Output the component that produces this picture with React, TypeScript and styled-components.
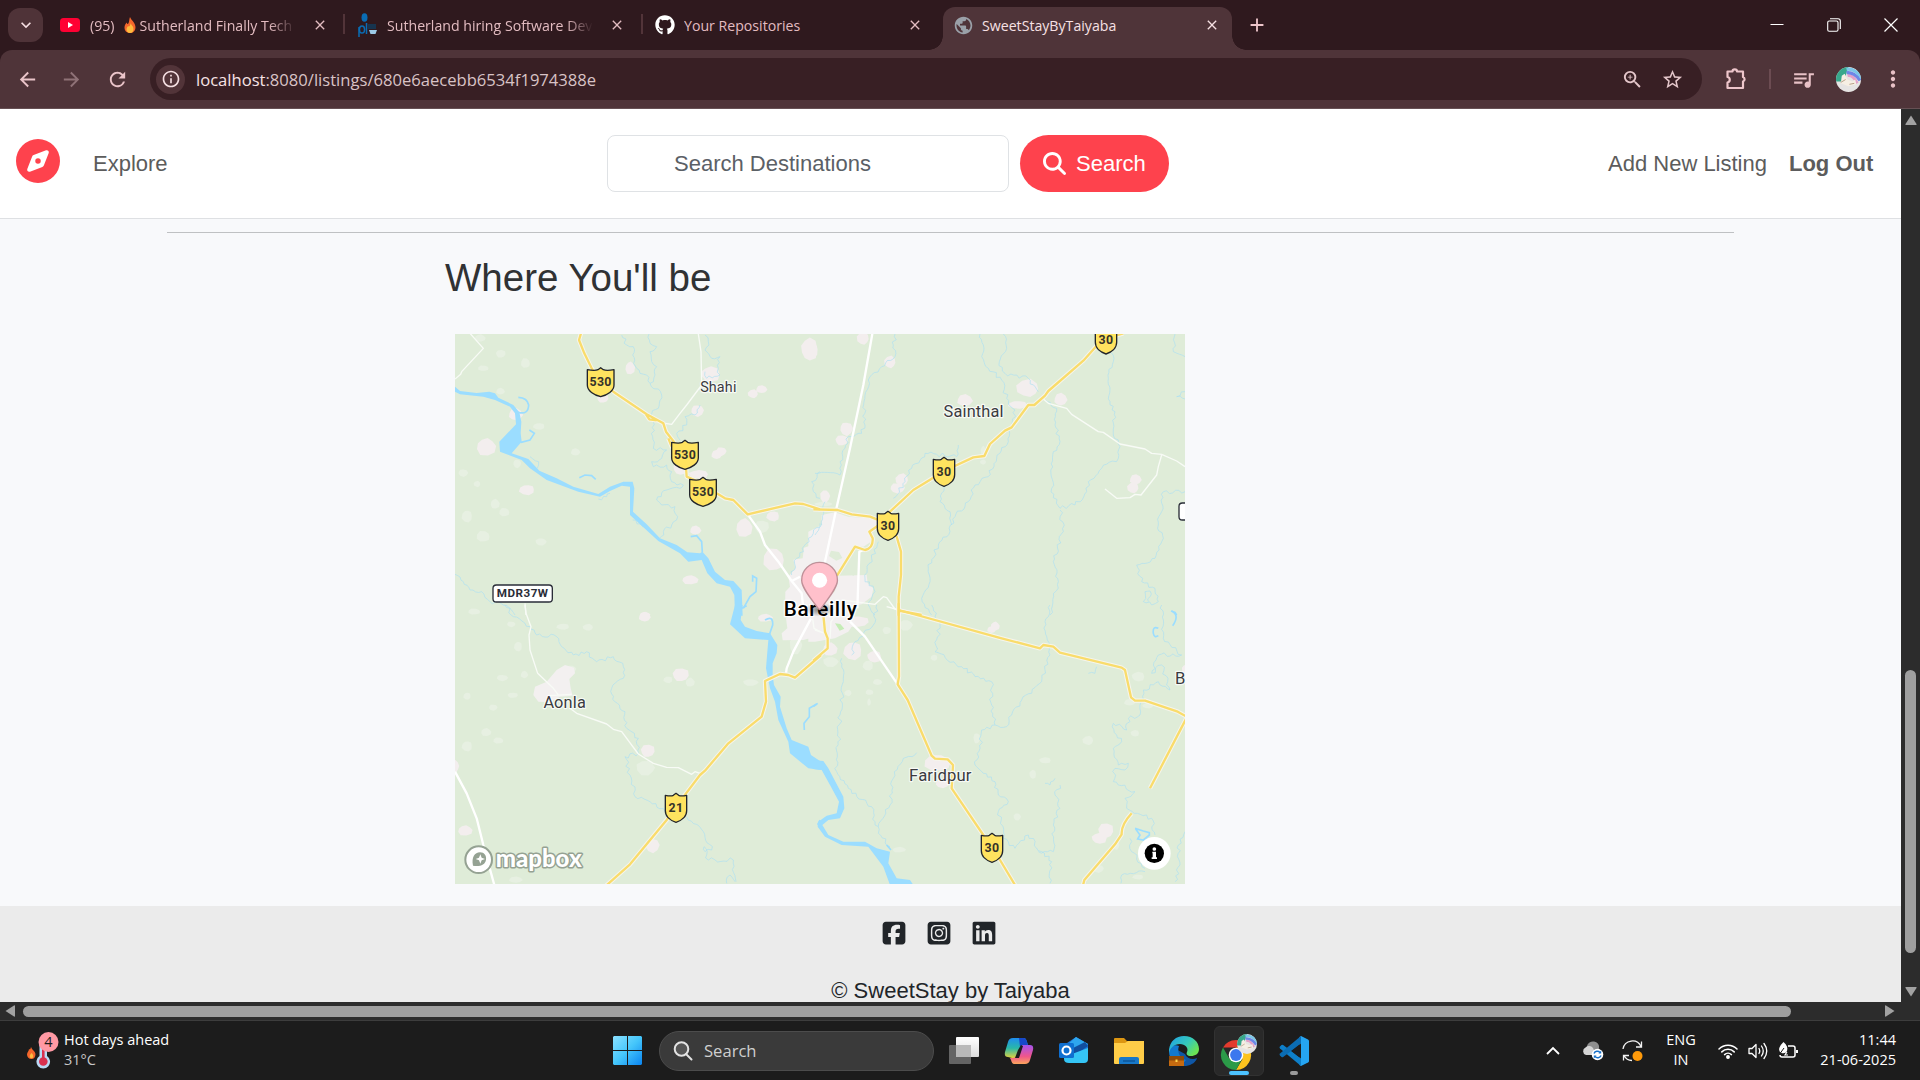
import React from "react";
import styled, { createGlobalStyle } from "styled-components";
import {
  MdAdd,
  MdArrowBack,
  MdArrowForward,
  MdClose,
  MdInfoOutline,
  MdKeyboardArrowDown,
  MdMoreVert,
  MdPublic,
  MdQueueMusic,
  MdRefresh,
  MdStarBorder,
  MdZoomIn,
} from "react-icons/md";
import {
  FaCompass,
  FaGithub,
  FaLinkedin,
  FaMagnifyingGlass,
  FaSquareFacebook,
  FaSquareInstagram,
} from "react-icons/fa6";

const ui = `"Open Sans", "Noto Sans", sans-serif`;
const body = `"Liberation Sans", Arial, sans-serif`;

const GlobalStyle = createGlobalStyle`
  * { box-sizing: border-box; }
  html, body { margin: 0; padding: 0; overflow: hidden; background: #1c1c1c; }
  svg { display: block; flex: none; }
`;

const Screen = styled.div`
  width: 1920px;
  height: 1080px;
  display: flex;
  flex-direction: column;
  overflow: hidden;
  font-family: ${ui};
`;

/* ---------- browser frame ---------- */

const TabStrip = styled.div`
  height: 50px;
  flex: none;
  display: flex;
  align-items: flex-end;
  background: #2f191e;
  padding-left: 8px;
`;

const TabSearch = styled.div`
  width: 35px;
  height: 34px;
  margin: 0 5px 8px 0;
  border-radius: 12px;
  background: #4f3338;
  color: #f6dfe2;
  display: flex;
  align-items: center;
  justify-content: center;
`;

const Tab = styled.div<{ $w: number; $l: number; $r: number; $active?: boolean }>`
  position: relative;
  width: ${(p) => p.$w}px;
  height: 43px;
  flex: none;
  display: flex;
  align-items: center;
  padding: 0 ${(p) => p.$r}px 7px ${(p) => p.$l}px;
  color: ${(p) => (p.$active ? "#f7e1e4" : "#e3bcc1")};
  background: ${(p) => (p.$active ? "#4f3439" : "transparent")};
  border-radius: 12px 12px 0 0;
  ${(p) =>
    p.$active &&
    `
    &::before, &::after {
      content: "";
      position: absolute;
      bottom: 0;
      width: 14px;
      height: 14px;
    }
    &::before { left: -14px; background: radial-gradient(circle at 0 0, transparent 13.5px, #4f3439 14px); }
    &::after { right: -14px; background: radial-gradient(circle at 100% 0, transparent 13.5px, #4f3439 14px); }
  `}
`;

const TabIcon = styled.div<{ $gap: number }>`
  width: 20px;
  margin-right: ${(p) => p.$gap}px;
  flex: none;
`;

const TabTitle = styled.div<{ $fade?: boolean }>`
  flex: 1;
  min-width: 0;
  margin-right: 13px;
  padding-top: 2px;
  display: flex;
  align-items: center;
  overflow: hidden;
  white-space: nowrap;
  font-size: 14.15px;
  line-height: 20px;
  ${(p) => p.$fade && `mask-image: linear-gradient(90deg, #000 calc(100% - 30px), transparent calc(100% - 3px));`}
`;

const TitleEmoji = styled.span`
  flex: none;
  margin: 0 4px 2px 9px;
`;

const TabDivider = styled.div`
  width: 2px;
  height: 20px;
  margin-bottom: 16px;
  background: #523439;
`;

const NewTab = styled.div`
  margin: 0 0 14px 14px;
  color: #edc5ca;
`;

const WindowButtons = styled.div`
  margin-left: auto;
  height: 50px;
  padding-right: 22px;
  display: flex;
  align-items: center;
  gap: 43px;
`;

const Toolbar = styled.div`
  height: 59px;
  flex: none;
  background: linear-gradient(#2f191e, #2f191e) top / 100% 12px no-repeat;
  color: #e8c1c6;
`;

const ToolbarInner = styled.div`
  height: 100%;
  display: flex;
  align-items: center;
  background: #4f3439;
  border-radius: 12px 12px 0 0;
  border-bottom: 1px solid #665054;
  padding-left: 16px;
`;

const NavButton = styled.div<{ $dim?: boolean; $gap: number }>`
  margin-right: ${(p) => p.$gap}px;
  color: ${(p) => (p.$dim ? "#8f7277" : "#eac4c9")};
`;

const Omnibox = styled.div`
  width: 1552px;
  height: 42px;
  border-radius: 21px;
  background: #381f24;
  display: flex;
  align-items: center;
  padding: 0 18px 0 6px;
`;

const SiteInfo = styled.div`
  width: 29px;
  height: 29px;
  border-radius: 50%;
  background: #523439;
  color: #f5dfe2;
  display: flex;
  align-items: center;
  justify-content: center;
  margin-right: 11px;
`;

const Url = styled.div`
  flex: 1;
  font-size: 16.6px;
  color: #d9c3c6;
  b {
    font-weight: 400;
    color: #f7e3e5;
  }
`;

const OmniAction = styled.div`
  margin-left: 17px;
  color: #e4c6ca;
`;

const ToolbarActions = styled.div`
  display: flex;
  align-items: center;
  padding-left: 23px;
`;

const ToolbarDivider = styled.div`
  width: 2px;
  height: 20px;
  margin: 0 20px 0 22px;
  background: #6c4c52;
`;

const Profile = styled.div`
  margin: 0 19px 0 20px;
`;

/* ---------- page ---------- */

const Viewport = styled.div`
  height: 893px;
  flex: none;
  display: flex;
`;

const Page = styled.div`
  width: 1901px;
  height: 893px;
  overflow: hidden;
  display: flex;
  flex-direction: column;
  background: #f8f9fb;
  font-family: ${body};
  font-size: 22px;
`;

const Navbar = styled.header`
  height: 110px;
  flex: none;
  display: flex;
  align-items: center;
  background: #fff;
  border-bottom: 1px solid #dee0e3;
  padding-left: 16px;
  color: #5c5c5c;
`;

const Brand = styled.div`
  color: #fe424d;
  margin: 0 33px 6px 0;
`;

const NavLink = styled.span<{ $bold?: boolean }>`
  font-weight: ${(p) => (p.$bold ? 700 : 400)};
  line-height: 33px;
`;

const SearchForm = styled.div`
  margin-left: auto;
  display: flex;
  gap: 11px;
`;

const SearchField = styled.div`
  width: 402px;
  height: 57px;
  border: 1px solid #dfe2e5;
  border-radius: 8px;
  padding-left: 66px;
  line-height: 55px;
  color: #5b6066;
`;

const SearchButton = styled.div`
  width: 149px;
  height: 57px;
  border-radius: 29px;
  background: #fe424d;
  color: #fff;
  display: flex;
  align-items: center;
  padding-left: 23px;
  gap: 10px;
`;

const Account = styled.nav`
  width: 293px;
  margin-left: 439px;
  display: flex;
  gap: 22px;
`;

const Rule = styled.div`
  width: 1567px;
  height: 1px;
  margin: 13px 0 0 167px;
  flex: none;
  background: #bfc1c3;
`;

const Section = styled.section`
  margin-left: 445px;
  padding-top: 22px;
  height: 673px;
  flex: none;
`;

const Heading = styled.h3`
  margin: 0 0 33px;
  font-size: 38.5px;
  line-height: 46px;
  font-weight: 400;
  color: #303234;
`;

const MapBox = styled.div`
  width: 730px;
  height: 550px;
  margin-left: 10px;
  overflow: hidden;
`;

const Footer = styled.footer`
  flex: 1;
  min-height: 0;
  overflow: hidden;
  background: #ebebeb;
  color: #212529;
  text-align: center;
  white-space: nowrap;
`;

const Socials = styled.div`
  display: flex;
  justify-content: center;
  gap: 19px;
  padding: 14px 24px 0 0;
`;

const Copyright = styled.div`
  margin-top: 28px;
  line-height: 33px;
`;

const VScroll = styled.div`
  width: 19px;
  background: #2c2c2c;
  display: flex;
  flex-direction: column;
  align-items: center;
  padding: 6px 0 5px;
`;

const VThumb = styled.div`
  width: 11px;
  height: 283px;
  margin-top: 545px;
  margin-bottom: auto;
  border-radius: 6px;
  background: #9f9f9f;
`;

const HScroll = styled.div`
  height: 18px;
  flex: none;
  background: #2c2c2c;
  display: flex;
  align-items: center;
  padding: 0 25px 0 5px;
`;

const HThumb = styled.div`
  width: 1768px;
  height: 11px;
  margin: 1px auto 0 8px;
  border-radius: 6px;
  background: #9f9f9f;
`;

/* ---------- taskbar ---------- */

const Taskbar = styled.div`
  height: 60px;
  flex: none;
  display: flex;
  align-items: center;
  background: #1c1c1c;
  border-top: 1px solid #3d3d3d;
  color: #fff;
  font-size: 14.5px;
`;

const Weather = styled.div`
  width: 587px;
  padding-left: 26px;
  display: flex;
  align-items: center;
  gap: 4px;
`;

const Lines = styled.div<{ $align?: string; $w?: number }>`
  width: ${(p) => (p.$w ? p.$w + "px" : "auto")};
  text-align: ${(p) => p.$align || "left"};
  line-height: 20px;
  padding-bottom: 2px;
  white-space: nowrap;
`;

const Muted = styled.div`
  color: #c9c9c9;
`;

const Start = styled.div`
  width: 72px;
  padding-left: 26px;
`;

const TaskSearch = styled.div`
  width: 275px;
  height: 40px;
  border-radius: 20px;
  background: #3a3a3a;
  border: 1px solid #4c4c4c;
  display: flex;
  align-items: center;
  gap: 11px;
  padding-left: 13px;
  font-size: 16.6px;
  color: #cfcfcf;
`;

const Apps = styled.div`
  display: flex;
  padding-left: 5px;
  gap: 5px;
`;

const AppButton = styled.div<{ $active?: boolean; $bar?: string; $barW?: number }>`
  position: relative;
  width: 50px;
  height: 50px;
  display: flex;
  align-items: center;
  justify-content: center;
  border-radius: 6px;
  background: ${(p) => (p.$active ? "#292929" : "transparent")};
  border: 1px solid ${(p) => (p.$active ? "#323232" : "transparent")};
  &::after {
    content: "";
    position: absolute;
    bottom: 0;
    width: ${(p) => p.$barW || 0}px;
    height: 4px;
    border-radius: 2px;
    background: ${(p) => p.$bar || "transparent"};
  }
`;

const Tray = styled.div`
  margin-left: auto;
  padding-right: 24px;
  display: flex;
  align-items: center;
`;

const TrayIcon = styled.div<{ $gap: number }>`
  margin-right: ${(p) => p.$gap}px;
`;

/* ---------- map data ---------- */

type Blob = [number, number, number, number];
interface Sheet {
  dx: number;
  dy: number;
  towns: Blob[];
  faint: Blob[];
  areas: string[];
  river: string;
  creeks: string;
  streams: string[];
  yellow: string;
  white: string;
  thin: string;
}

const NUDGE = [0.95, 0.8, 1.05, 0.75, 1, 0.85, 1.08, 0.78, 0.9];
const blobPath = ([cx, cy, w, h]: Blob) => {
  const pts: string[] = [];
  for (let i = 0; i < 9; i++) {
    const k = NUDGE[(i * 2 + Math.round(cx + 9)) % 9];
    const a = (i / 9) * Math.PI * 2;
    pts.push(`${(cx + (Math.cos(a) * w * k) / 2).toFixed(1)} ${(cy + (Math.sin(a) * h * k) / 2).toFixed(1)}`);
  }
  return "M" + pts.join("L") + "Z";
};

const meander = (src: string, seed: number) => {
  const n = src.split(/[^0-9.-]+/).filter(Boolean).map(Number);
  let s = seed * 7919 + 13;
  const rnd = () => {
    s = (s * 1103515245 + 12345) % 2147483648;
    return s / 2147483648 - 0.5;
  };
  let d = `M${n[0]} ${n[1]}`;
  for (let i = 2; i < n.length; i += 2) {
    const dx = n[i] - n[i - 2];
    const dy = n[i + 1] - n[i - 1];
    const len = Math.hypot(dx, dy) || 1;
    const steps = Math.max(1, Math.round(len / 9));
    for (let j = 1; j <= steps; j++) {
      const o = j === steps ? 0 : rnd() * 13;
      d += `L${(n[i - 2] + (dx * j) / steps - (dy / len) * o).toFixed(1)} ${(n[i - 1] + (dy * j) / steps + (dx / len) * o).toFixed(1)}`;
    }
  }
  return d;
};

const sheets: Sheet[] = [
  {
    dx: -15,
    dy: -27,
    towns: [[1075, 73, 54, 76], [540, 127, 32, 42], [778, 148, 62, 52], [910, 208, 34, 28], [933, 194, 36, 26], [740, 256, 42, 38], [195, 270, 45, 40], [108, 363, 64, 58], [232, 493, 50, 34], [798, 390, 34, 30], [812, 378, 34, 28], [688, 430, 44, 44], [742, 448, 64, 28], [882, 605, 54, 62], [970, 572, 42, 34], [735, 617, 36, 30], [720, 763, 54, 30], [975, 705, 70, 74], [458, 222, 38, 28], [585, 868, 34, 16]],
    faint: [[152, 88, 32, 26], [102, 130, 36, 18], [228, 115, 30, 32], [90, 38, 36, 24], [150, 200, 28, 22], [268, 303, 38, 22], [375, 382, 30, 24], [200, 415, 26, 28], [38, 443, 32, 24], [82, 478, 22, 20], [52, 572, 34, 40], [135, 535, 30, 32], [165, 562, 34, 28], [102, 635, 44, 36], [275, 650, 36, 24], [935, 608, 48, 42]],
    areas: ["M1110 630L1090 640 1086 660 1062 668 1058 700 1030 704 1036 730 1015 755 1020 785 1006 800 1005 870H1110Z"],
    river: "M15 185L30 198 80 204 118 200 135 205 145 218 190 240 208 262 214 290 212 325 215 350 185 385 235 402 268 437 320 460 370 485 445 507 480 485 520 470 548 470 553 490 549 560 590 598 630 640 680 660 712 682 750 685 757 680 775 700 795 740 825 765 850 768 875 795 878 872 855 872 853 810 840 785 800 775 772 745 755 705 715 710 690 685 625 648 540 570 540 485 515 482 480 498 450 515 385 500 290 465 240 430 215 405 150 380 148 350 198 298 195 265 180 245 135 225 100 215 30 208 15 200Z",
    creeks: "M205 262Q235 270 236 240Q232 218 205 217M213 352L240 345 253 325 238 315M388 458L405 450 425 452 437 463M722 635L740 632 755 650 757 682M880 850L900 815 918 800 920 760 908 753 908 770",
    streams: ["515 30 530 60 550 65 548 90 560 130 570 145 590 150 600 175 635 210 625 250 595 270 610 290 610 370 650 375 635 400 605 410 610 425 650 420 665 440 665 470 700 480 690 490 650 495 620 525 635 540 675 545 683 575 665 600 640 620 628 640", "597 27 600 55 620 65 600 80 605 110 620 125 615 150 600 175", "765 30 775 50 765 75 785 100 810 95 805 130 810 150 770 160 765 140", "750 240 735 270 705 275 710 300 680 325 690 345", "1110 440 1085 470 1090 500 1110 520", "1110 595 1090 625 1075 640 1060 680 1040 700 1025 750", "15 748 40 770 60 795 95 800 120 830 160 840 185 855 195 870", "240 395 266 410 262 430", "445 522 470 515 480 505", "548 585 570 597 590 605"],
    yellow: "M396 15L387 45 403 85 425 130 452 170 490 200 590 268 640 295 648 320 675 355 705 390 710 455 755 475 800 505 825 520 850 525 893 568 1035 535 1060 537 1110 553M588 268L598 283 620 286 M655 340L665 365 690 380",
    white: "M893 568L930 620 945 660 985 710 1025 768 1055 805 1060 850M1025 768L1050 755",
    thin: "M745 27L753 80 755 180 710 240 690 265 665 298 645 295M60 25L100 70 35 140 32 148 15 162M225 835L228 870",
  },
  {
    dx: 1080,
    dy: -27,
    towns: [[145, 42, 40, 42], [-2, 75, 24, 44], [226, 113, 38, 40], [447, 228, 50, 40], [640, 192, 74, 58], [610, 238, 62, 26], [735, 225, 42, 42], [92, 310, 42, 44], [80, 348, 42, 34], [262, 466, 42, 40], [245, 488, 48, 34], [32, 513, 32, 42], [960, 465, 38, 34], [955, 490, 38, 36]],
    faint: [[505, 380, 16, 34], [505, 412, 20, 16], [28, 538, 60, 14], [60, 665, 20, 20]],
    areas: ["M-20 620L20 600 20 570 60 562 100 575 190 582 186 610 166 626 168 650 145 665 115 662 85 720 70 752 155 750 158 775 175 790 170 815 140 838 100 845 70 870H-20Z"],
    river: "",
    creeks: "M1068 858L1080 862 1085 870",
    streams: ["240 27 235 60 240 95 200 125 160 165 147 230 150 300 140 325 100 335 90 370 75 410 75 450 0 445", "495 27 505 60 500 95 520 130 560 165 575 220 600 255 590 300 580 350 545 400 520 455 480 480 460 530 420 575 405 620 370 660 340 730 345 770 320 820 350 870", "565 27 575 70 553 110 570 145 640 160 670 200", "430 360 425 395 330 385 290 430 270 470 235 520", "880 70 895 110 880 160 885 230 900 260 895 330 915 365 910 400 860 430 820 470 815 500 780 540 735 550 710 490 715 380 735 350 720 300 725 250 690 225", "735 555 745 620 715 710 730 770 705 870", "387 480 375 530 405 560 410 600", "1080 27 1075 80 1110 95", "1110 200 1085 215 1110 222", "1110 500 1045 500 1040 560 1030 600 1045 640 1020 700 965 720 980 770 1020 790 1030 830 1010 840 985 830 990 800 1005 798 1000 830", "190 650 170 700 150 760 180 800 160 840 180 870", "30 530 20 600 0 630"],
    yellow: "M-5 553L68 555 110 568 165 575 195 587M66 752L120 665 150 675Q175 670 173 640L163 620 195 598M219 600L225 560 295 495 355 458 387 438 475 397 508 393 525 357 570 317 590 307 640 240 658 240 690 212 700 198 805 107 845 62 873 40 925 25M219 600L245 635 258 680 258 750 251 815 251 872M251 857L320 870",
    white: "M174 15L145 180 105 370 62 560 30 710 10 800M150 674L133 680 127 850",
    thin: "M685 222L700 235 755 250 770 268 850 320 865 322 915 357 990 372 1010 385 1040 388 1085 408 1110 425M1040 390L1030 425 1025 450 978 510 960 508 945 518 905 520 870 492M80 825L180 838 205 815 215 818 240 852 252 856",
  },
  {
    dx: -15,
    dy: 813,
    towns: [[582, 37, 38, 32], [692, 212, 54, 44], [593, 440, 46, 42], [605, 720, 46, 46], [45, 675, 48, 34], [14, 483, 32, 46], [945, 37, 50, 26]],
    faint: [[182, 57, 28, 18], [340, 64, 42, 20], [415, 68, 34, 22], [205, 123, 26, 32], [155, 218, 38, 20], [222, 210, 24, 24], [188, 272, 34, 18], [52, 272, 24, 24], [128, 307, 28, 20], [108, 380, 34, 26], [147, 407, 34, 20], [52, 422, 34, 34], [590, 488, 60, 50], [655, 223, 30, 22], [720, 230, 30, 30], [905, 232, 50, 22], [195, 825, 44, 20], [75, 20, 40, 20], [1040, 120, 40, 60], [365, 192, 34, 24]],
    areas: ["M250 270L255 245 290 230 320 195 345 180 372 188 375 205 358 222 362 250 368 272 330 275 300 292 265 290Z", "M1008 40L1060 0H1115V90L1060 105 998 106 995 85 1012 70Z"],
    river: "M855 0H878L872 45 885 65 920 78 960 85 982 120 980 145 968 175 968 210 972 240 992 275 990 305 1010 370 1025 405 1075 425 1083 450 1110 468 1112 495 1075 490 1020 445 1015 410 985 345 975 290 960 250 948 190 952 140 955 105 885 100 840 58Z",
    creeks: "M875 10L890 2M945 45Q970 30 968 60L957 92M1100 297L1078 310 1078 335 1062 355 1063 375M1110 645L1104 657 1110 668",
    streams: ["165 0 190 35 240 65 260 90 320 95 335 125 370 150 410 140 440 170 490 155 520 185 520 220 485 250 495 290 525 320 530 370 565 400 565 445 525 455 540 510 555 575 600 590 645 620", "710 635 760 680 785 735 765 740 762 725 775 765 850 765 858 830", "830 835 840 810 855 830"],
    yellow: "M1113 150L1035 218 1015 210 990 207 945 228 948 290 935 335 835 415 765 497 750 510 678 605 650 645 540 778 465 845",
    white: "M1083 40L1030 140 1010 190 1008 205M15 500L50 565 80 640 100 720 133 840",
    thin: "M1088 40L1092 70 1110 80M225 0L228 25 243 65 237 90 240 135 263 205 310 250 325 270M300 272L365 268M360 310L380 325 470 357 490 373 515 380 565 447 610 475 650 487 685 488 725 508 735 500 750 505",
  },
  {
    dx: 1080,
    dy: 813,
    towns: [[540, 62, 30, 30], [528, 75, 28, 22], [372, 475, 88, 54], [380, 535, 46, 28], [872, 680, 50, 50], [850, 700, 50, 36], [1112, 195, 22, 36], [115, 135, 60, 60], [175, 155, 46, 40], [45, 130, 48, 44], [125, 52, 80, 36]],
    faint: [[215, 78, 28, 24], [275, 60, 44, 36], [50, 170, 50, 34], [160, 180, 34, 34], [186, 232, 30, 20], [100, 265, 24, 20], [165, 262, 26, 18], [162, 290, 12, 24], [358, 157, 22, 20], [485, 402, 22, 34], [688, 466, 38, 20], [652, 508, 22, 30], [608, 635, 24, 24], [820, 408, 36, 30], [958, 385, 28, 22], [967, 215, 42, 32], [942, 293, 36, 22], [1000, 303, 36, 18], [252, 733, 44, 18], [970, 815, 36, 16], [848, 790, 36, 26], [905, 720, 20, 30]],
    areas: ["M-20 0H110L120 50 100 80 60 100 0 110H-20Z"],
    river: "M-5 465L25 468 40 490 85 575 88 610 75 640 40 645 22 660 40 690 85 710 150 710 185 730 225 740 220 775 245 820 285 825 295 840H225L205 785 160 725 80 720 30 695 8 665 10 650 35 632 65 625 72 590 45 540 20 495-5 492Z",
    creeks: "M960 670L985 678 1003 683 1003 690 985 705 968 702 975 690 962 672M1070 18Q1095 30 1073 62M1030 70Q1012 62 1015 85Q1018 100 1030 92M-5 305L8 295M215 720L228 735",
    streams: ["185 0 175 60 120 110 110 150", "80 160 85 230 75 330 65 500 100 550 170 605 180 660 225 725", "305 443 265 460 235 520 225 600 190 665", "350 0 375 60 360 140 440 185 480 215 530 230 530 300 540 360 500 375 495 430 480 480 540 530 550 570 580 590 550 620 565 700 600 730 640 690 680 740 710 770 705 835", "705 0 690 50 705 150 680 230 620 285 590 330 575 365 540 360", "735 540 720 570 735 610 715 660 715 740 670 740", "690 535 705 540 720 520", "845 185 840 205 820 205", "1040 0 1045 100 1100 150 1030 150 1010 205 1040 180 1065 255 1030 230 985 255 975 330 940 340 935 375 895 355 905 390 920 410 895 430 910 480 940 475 930 495 900 490 895 530 960 560 930 580 935 610 1010 640 1020 690", "945 700 950 740 990 790", "1110 680 1090 720 1095 780 1080 830", "990 800 920 810 918 835"],
    yellow: "M251 -5L252 215 248 238 278 285 350 452 360 461 398 463 414 480 410 550 505 690 555 765 603 845M251 15L560 100 675 130 685 120 715 125 735 143 920 188 930 195 948 277 960 287 990 287 1088 320 1115 335M1115 338L1005 550M950 625Q918 660 920 688L900 718 808 825 803 845M22 -30L25 30 30 80 38 100 38 130 -5 167",
    white: "M105 50L150 95 248 238",
    thin: "M0 75L30 85M70 20L48 50 45 100M215 5L252 15",
  },
];

const Shield = ({ x, y, n }: { x: number; y: number; n: string }) => {
  const w = n.length > 2 ? 40 : 32;
  return (
    <g transform={`translate(${x} ${y})`}>
      <path
        d={`M${-w} -38C${-w + 10} -36 -14 -35 -8 -38L0 -44 8 -38C14 -35 ${w - 10} -36 ${w} -38V8C${w} 26 ${w * 0.5} 38 0 43C${-w * 0.5} 38 ${-w} 26 ${-w} 8Z`}
        fill="#ffe35f"
        stroke="#22252b"
        strokeWidth="4"
        strokeLinejoin="round"
      />
      <text y="12" textAnchor="middle" fontFamily="Roboto, sans-serif" fontWeight="700" fontSize="37" letterSpacing="1" fill="#34322a">
        {n}
      </text>
    </g>
  );
};

const Place = ({ x, y, size, children }: { x: number; y: number; size: number; children: string }) => (
  <text
    x={x}
    y={y}
    textAnchor="middle"
    fontFamily="Roboto, sans-serif"
    fontSize={size}
    letterSpacing="0.5"
    fill="#3a3a3f"
    stroke="#fff"
    strokeOpacity="0.75"
    strokeWidth="7"
    strokeLinejoin="round"
    paintOrder="stroke"
  >
    {children}
  </text>
);

const CityMap = () => {
  const layer = (render: (s: Sheet, i: number) => React.ReactNode) =>
    sheets.map((s, i) => (
      <g key={i} transform={`translate(${s.dx} ${s.dy})`}>
        {render(s, i)}
      </g>
    ));
  return (
    <svg width="730" height="550" viewBox="0 0 2190 1650">
      <defs>
        <radialGradient id="pinShadow">
          <stop offset="0" stopColor="#000" stopOpacity="0.5" />
          <stop offset="1" stopColor="#000" stopOpacity="0" />
        </radialGradient>
      </defs>
      <rect width="2190" height="1650" fill="#dfecd8" />
      {layer((s) => (
        <>
          <path d={s.faint.map(blobPath).join("")} fill="#e7f0e2" />
          <path d={s.towns.map(blobPath).join("")} fill="#f3eeee" />
          <path d={s.areas.join("")} fill="#f3f0f0" />
        </>
      ))}
      <path d="M1128 650l24 4 10 18-18 8-22-14zM1180 700l20-8 10 22-16 12zM1128 760l14 6-6 12z" fill="#dfecd8" />
      <path d="M1140 868l16 2 12 14-14 6z" fill="#c5ecb6" />
      {layer((s) => (
        <g fill="none" stroke="#aee0f2" strokeOpacity="0.85" strokeWidth="2.4">
          {s.streams.map((p, i) => (
            <path key={i} d={meander(p, i + 3)} />
          ))}
        </g>
      ))}
      {layer((s) => (
        <>
          <path d={s.river} fill="#9bddff" />
          <path d={s.creeks} fill="none" stroke="#9bddff" strokeWidth="5" />
          <path d={s.thin} fill="none" stroke="#f8fbf6" strokeWidth="4" strokeLinejoin="round" />
          <path d={s.white} fill="none" stroke="#fff" strokeWidth="7" strokeLinejoin="round" />
        </>
      ))}
      {layer((s) => (
        <path d={s.yellow} fill="none" stroke="#f6f5ec" strokeWidth="13" strokeLinejoin="round" />
      ))}
      {layer((s) => (
        <path d={s.yellow} fill="none" stroke="#f9dc6b" strokeWidth="7" strokeLinejoin="round" />
      ))}
      <g transform="translate(-15 -27)">
        <Shield x={452} y={172} n="530" />
        <Shield x={705} y={390} n="530" />
        <Shield x={759} y={501} n="530" />
        <rect x="129" y="780" width="178" height="51" rx="10" fill="#fff" stroke="#2a2d38" strokeWidth="4" />
        <text x="218" y="817" textAnchor="middle" fontFamily="Roboto, sans-serif" fontWeight="700" fontSize="35" letterSpacing="1.500" fill="#2a2d38">
          MDR37W
        </text>
        <Place x={805} y={202} size={43}>Shahi</Place>
      </g>
      <g transform="translate(1080 -27)">
        <Shield x={873} y={44} n="30" />
        <Shield x={387} y={441} n="30" />
        <Shield x={219} y={603} n="30" />
        <rect x="1092" y="534" width="80" height="51" rx="10" fill="#fff" stroke="#2a2d38" strokeWidth="4" />
        <Place x={476} y={276} size={49}>Sainthal</Place>
      </g>
      <g transform="translate(-15 813)">
        <Shield x={678} y={609} n="21" />
        <Place x={344} y={309} size={49}>Aonla</Place>
      </g>
      <g transform="translate(1080 813)">
        <Shield x={531} y={729} n="30" />
        <Place x={376} y={529} size={50}>Faridpur</Place>
        <Place x={1096} y={238} size={50}>B</Place>
      </g>
      <text x="1097" y="845" textAnchor="middle" fontFamily="Roboto, sans-serif" fontWeight="500" fontSize="62" letterSpacing="2" fill="#000" stroke="#fff" strokeWidth="8" strokeLinejoin="round" paintOrder="stroke">
        Bareilly
      </text>
      <g transform="translate(1038 683) scale(4.125)">
        <ellipse cx="13.5" cy="34.8" rx="10.5" ry="5.2" fill="url(#pinShadow)" />
        <path
          d="M27,13.5C27,19.07 20.25,27 14.75,34.5C14.02,35.5 12.98,35.5 12.25,34.5C6.75,27 0,19.22 0,13.5C0,6.04 6.04,0 13.5,0C20.96,0 27,6.04 27,13.5Z"
          fill="#ffc0cb"
        />
        <path
          d="M13.5,0.5C20.7,0.5 26.5,6.3 26.5,13.5C26.5,18.9 19.8,26.7 14.35,34.2C13.85,34.9 13.15,34.9 12.65,34.2C7.2,26.7 0.5,19 0.5,13.5C0.5,6.3 6.3,0.5 13.5,0.5Z"
          fill="none"
          stroke="#000"
          strokeOpacity="0.25"
        />
        <circle cx="13.5" cy="13.5" r="5.5" fill="#fff" />
      </g>
      <g transform="translate(-15 813)">
        <circle cx="86" cy="764" r="40" fill="#fff" stroke="#95a293" strokeWidth="6" />
        <path d="M69 782C64 757 74 742 90 742C103 742 110 752 108 764C106 780 88 786 69 782Z" fill="#95a293" />
        <path d="M91 748L95 758 105 762 95 766 91 776 87 766 77 762 87 758Z" fill="#fff" />
        <text x="137" y="787" fontFamily="Lato, sans-serif" fontWeight="900" fontSize="72" textLength="258" fill="#fff" stroke="#95a293" strokeWidth="9" strokeLinejoin="round" paintOrder="stroke">
          mapbox
        </text>
      </g>
      <g transform="translate(2098 1558)">
        <circle r="49" fill="#fff" />
        <circle r="29" fill="#000" />
        <circle cy="-13" r="5.500" fill="#fff" />
        <path d="M-6 -5H5V12H8V17H-8V12H-5V0H-6Z" fill="#fff" />
      </g>
    </svg>
  );
};

/* ---------- small drawings ---------- */

const YouTube = () => (
  <svg width="20" height="14" viewBox="0 0 20 14">
    <rect width="20" height="14" rx="3.500" fill="#ff0033" />
    <path d="M8 4L13 7 8 10Z" fill="#fff" />
  </svg>
);

const Flame = () => (
  <svg width="12" height="16" viewBox="0 0 12 16">
    <path d="M6 0C7 3 11 5 11.500 10C11.500 14 9 16 6 16C2.500 16 .5 13.500 .5 10.500C.5 8.500 1.500 7 2.500 5.500C3 7 3.500 7 4 7C5.500 5 5 2.500 6 0Z" fill="#f4662b" />
    <path d="M6.500 6C7 8 9.500 9 9.500 12C9.500 14.500 8 16 6 16C4 16 2.500 14.500 2.500 12.500C2.500 11 3.500 10 4 9C5 10 6.500 9 6.500 6Z" fill="#fdbb3f" />
  </svg>
);

const JobsLogo = () => (
  <svg width="20" height="24" viewBox="0 0 20 24">
    <ellipse cx="6.500" cy="4.500" rx="3" ry="4.300" fill="#0a6cb4" />
    <g fill="none" stroke="#0a6cb4" strokeWidth="1.500">
      <path d="M8.500 10V21M1 24V14" />
      <ellipse cx="4" cy="16.500" rx="2.600" ry="3.500" />
    </g>
    <path d="M10 11h8v5h-8z" fill="#17344f" />
    <path d="M11 17H19L17.500 21H12.500Z" fill="#9cc9e6" />
  </svg>
);

const Avatar = ({ size }: { size: number }) => (
  <svg width={size} height={size} viewBox="0 0 26 26">
    <clipPath id={`av${size}`}>
      <circle cx="13" cy="13" r="13" />
    </clipPath>
    <g clipPath={`url(#av${size})`}>
      <rect width="26" height="26" fill="#e6e4e3" />
      <path d="M0 0H13L8 15H0Z" fill="#38a88c" />
      <g fill="none">
        <path d="M12 9C16 8 20 12 22 17" stroke="#e3a0c8" strokeWidth="3" />
        <path d="M11 6C16 5 22 9 25 14" stroke="#6e86e6" strokeWidth="3.400" />
        <path d="M11 2.500C17 1 24 6 27 12" stroke="#7cc7e8" strokeWidth="3.400" />
      </g>
      <path d="M6 9L9 7 12 13 17 15 20 13 21 18 13 20 5 17Z" fill="#f6efe4" />
      <path d="M5 16L10 13M14 18L19 17" stroke="#b59c84" />
    </g>
  </svg>
);

const WeatherIcon = () => (
  <svg width="34" height="38" viewBox="0 0 34 38">
    <path d="M5 15C6 18 9 19 9.500 22C9.500 25 8 27 5.500 27C3 27 1 25 1 22.500C1 20.500 3 19 3 17C4 18 4.500 17 5 15Z" fill="#f4662b" />
    <path d="M5.500 21C7 22.500 7.500 23.500 7 25.500Q5.500 27 4 25.500Q3 23.500 5.500 21Z" fill="#fdbb3f" />
    <path d="M13.500 12H21V24A6.800 6.800 0 1 1 13.500 24Z" fill="#b9d9f5" />
    <circle cx="17.300" cy="29.500" r="4.300" fill="#d8304f" />
    <path d="M17.300 13V29" stroke="#d8304f" strokeWidth="2.600" />
    <circle cx="22.500" cy="10" r="10" fill="#ff99a4" />
    <text x="22.500" y="15" textAnchor="middle" fontFamily="Open Sans, sans-serif" fontSize="14.500" fill="#1c1c1c">
      4
    </text>
  </svg>
);

const Windows = () => (
  <svg width="29" height="29" viewBox="0 0 29 29">
    <defs>
      <linearGradient id="win" x1="0" y1="0" x2="1" y2="1">
        <stop offset="0" stopColor="#8be1ff" />
        <stop offset="0.5" stopColor="#45c6fb" />
        <stop offset="1" stopColor="#0a84f0" />
      </linearGradient>
    </defs>
    <path d="M1 0H14V14H0V1ZM15 0H28L29 1V14H15ZM0 15H14V29H1L0 28ZM15 15H29V28L28 29H15Z" fill="url(#win)" />
  </svg>
);

const Lens = () => (
  <svg width="20" height="20" viewBox="0 0 20 20" fill="none" stroke="#e3e3e3" strokeWidth="2">
    <circle cx="8.500" cy="8" r="6.800" fill="#555" />
    <path d="M13 13L18.500 18.500" strokeLinecap="round" />
  </svg>
);

const TaskView = () => (
  <svg width="30" height="28" viewBox="0 0 30 28">
    <defs>
      <linearGradient id="tv" x1="0" y1="0" x2="0" y2="1">
        <stop offset="0" stopColor="#ffffff" />
        <stop offset="1" stopColor="#dcdcdc" />
      </linearGradient>
    </defs>
    <rect x="0" y="8" width="22" height="19" rx="1" fill="#646464" />
    <rect x="7" y="0" width="23" height="20" rx="1" fill="url(#tv)" />
    <rect x="7" y="8" width="15" height="12" fill="#b9b9b9" />
  </svg>
);

const Copilot = () => (
  <svg width="30" height="28" viewBox="0 0 30 28">
    <defs>
      <linearGradient id="cpa" x1="0" y1="0" x2="0" y2="1">
        <stop offset="0" stopColor="#1f8df0" />
        <stop offset="0.5" stopColor="#29b8a8" />
        <stop offset="1" stopColor="#e8d33a" />
      </linearGradient>
      <linearGradient id="cpb" x1="0" y1="0" x2="0" y2="1">
        <stop offset="0" stopColor="#a453ee" />
        <stop offset="0.6" stopColor="#f0568b" />
        <stop offset="1" stopColor="#fba55c" />
      </linearGradient>
    </defs>
    <path d="M9 1H20Q22 1 23 5L24 8H20Q17 8 16 12L13 19Q12 22 8 21L4 20Q0 20 1 15L4 5Q5 1 9 1Z" fill="url(#cpa)" />
    <path d="M15 1H20Q22 1 23 5L24 8H19Q17 8 16 10Z" fill="#1748c9" />
    <path d="M18 8H26Q30 8 29 13L26 23Q25 27 21 27H10Q8 27 7 23L6 21H9Q12 21 13 17Z" fill="url(#cpb)" />
    <path d="M14 13L17 8 19 9 15 21 11 21Z" fill="#1c1c1c" />
  </svg>
);

const Outlook = () => (
  <svg width="30" height="28" viewBox="0 0 30 28">
    <path d="M5 8L17 0 29 7V12L17 20 5 14Z" fill="#1b74d8" />
    <path d="M17 0L29 7 14 16 8 8Z" fill="#2ea6ee" />
    <path d="M29 9L13 20 8 14 26 5Z" fill="#114f9f" />
    <path d="M5 20L29 11V22Q29 26 25 26H10Q5 26 5 22Z" fill="#35c5f5" />
    <rect x="0" y="6" width="15" height="15" rx="1.500" fill="#0f6fd0" />
    <circle cx="7.500" cy="13.500" r="4" fill="none" stroke="#fff" strokeWidth="2.200" />
  </svg>
);

const Folder = () => (
  <svg width="30" height="28" viewBox="0 0 30 28">
    <path d="M0 2Q0 1 1 1H10L13 4H30V26H0Z" fill="#dc9612" />
    <path d="M0 6H11L14 4H30V26Q30 27 29 27H1Q0 27 0 26Z" fill="#ffcd48" />
    <path d="M5 27V22Q5 20 7 20H23Q25 20 25 22V27Z" fill="#1878c8" />
    <path d="M9 24H21" stroke="#0b4d8d" strokeWidth="1.200" />
  </svg>
);

const Edge = () => (
  <svg width="30" height="30" viewBox="0 0 30 30">
    <defs>
      <linearGradient id="edg" x1="0" y1="0" x2="1" y2="0.6">
        <stop offset="0" stopColor="#1fa0e8" />
        <stop offset="0.6" stopColor="#35c9bb" />
        <stop offset="1" stopColor="#6be354" />
      </linearGradient>
    </defs>
    <path d="M5 12C1 24 10 31 17 30C23 29 27 26 28 22C24 24 18 23 16 18Z" fill="#0f57a6" />
    <path d="M0 15C0 11 5 8 10 10C8 15 10 22 17 24C14 30 0 30 0 15Z" fill="#1279cf" />
    <path d="M0 14C1 5 7 0 15 0C24 0 30 6 30 13C30 18 26 20 22 20C18 20 17 18 18 16C20 12 16 8 11 8C5 8 1 12 0 17Z" fill="url(#edg)" />
    <rect x="0" y="20" width="15" height="10" fill="#c56a10" />
    <rect x="0" y="20" width="15" height="4.500" fill="#8e4a09" />
    <rect x="6.500" y="23.500" width="2" height="2.500" fill="#ffd54d" />
  </svg>
);

const Chrome = () => (
  <svg width="38" height="38" viewBox="0 0 38 38">
    <path d="M3 15.500A15 15 0 0 1 29 15.500H16Z" fill="#e33b2e" />
    <path d="M16 15.500H29A15 15 0 0 1 16 38L22.500 27Z" fill="#fcc31e" />
    <path d="M3 15.500L9.500 27 22 27 16 38A15 15 0 0 1 3 15.500Z" fill="#2b9a48" />
    <circle cx="16" cy="23" r="7.300" fill="#fff" />
    <circle cx="16" cy="23" r="5.900" fill="#3b78ee" />
    <g transform="translate(17 2)">
      <Avatar size={20} />
    </g>
  </svg>
);

const VSCode = () => (
  <svg width="30" height="30" viewBox="0 0 30 30">
    <path d="M22 0L29 3.500Q30 4 30 5V25Q30 26 29 26.500L22 30L20.500 29V1Z" fill="#25a5f2" />
    <path d="M22 30L1 12.500Q0 11.500 1 10.500L2.500 9Q3.300 8.500 4.200 9L22 22.500Z" fill="#0e7fc9" />
    <path d="M22 0L1 17.500Q0 18.500 1 19.500L2.500 21Q3.300 21.500 4.200 21L22 7.500Z" fill="#0b6db4" />
    <path d="M22 7.500V22.500L12.500 15Z" fill="#1c1c1c" />
  </svg>
);

const CloudSync = () => (
  <svg width="22" height="20" viewBox="0 0 22 20">
    <path d="M5 5A6 5.500 0 0 1 17 7L18 12H6Z" fill="#8e8e8e" />
    <path d="M4 14A4 4 0 0 1 3.500 6.500A5 5 0 0 1 11 7L14 14Z" fill="#d4d4d4" />
    <circle cx="15.500" cy="13.500" r="5.800" fill="#fff" />
    <g fill="none" stroke="#1670c8" strokeWidth="1.500">
      <path d="M12 12.500A3.600 3.600 0 0 1 18 11.500M19 14.500A3.600 3.600 0 0 1 13 15.500" />
    </g>
    <path d="M19.200 9.500V12.500H16.500ZM11.800 17.500V14.500H14.500Z" fill="#1670c8" />
  </svg>
);

const UpdateIcon = () => (
  <svg width="22" height="22" viewBox="0 0 22 22" fill="none" stroke="#f2f2f2" strokeWidth="1.300">
    <path d="M1 9A9.500 9.500 0 0 1 19 6.500M19.500 1.500V7H14M10 20.500A9 9 0 0 1 2 15.500M1.500 20.500V15.500H7" />
    <circle cx="15.500" cy="16" r="5" fill="#ff9a0a" stroke="none" />
  </svg>
);

const Wifi = () => (
  <svg width="20" height="16" viewBox="0 0 20 16" fill="none" stroke="#fff" strokeWidth="1.500" strokeLinecap="round">
    <path d="M1 6A12.500 12.500 0 0 1 19 6M3.800 8.900A8.700 8.700 0 0 1 16.200 8.900M6.600 11.600A4.900 4.900 0 0 1 13.400 11.600" />
    <circle cx="10" cy="14" r="1.200" fill="#fff" />
  </svg>
);

const Volume = () => (
  <svg width="20" height="18" viewBox="0 0 20 18" fill="none" stroke="#fff" strokeWidth="1.300" strokeLinejoin="round" strokeLinecap="round">
    <path d="M1 6.500H4L8 2.500V15.500L4 11.500H1ZM11 6.500Q12.500 9 11 11.500M13.500 4Q17 9 13.500 14M16 1.500Q21.500 9 16 16.500" />
  </svg>
);

const Battery = () => (
  <svg width="20" height="18" viewBox="0 0 20 18" fill="none" stroke="#fff" strokeWidth="1.500">
    <path d="M10 4H15Q17 4 17 6V13Q17 15 15 15H4Q2 15 2 13" />
    <path d="M19 8V11" strokeWidth="2" />
    <path d="M5.500 0C9 3 10 6 9 9C8 11.500 4 12 2 10C0 7 1.500 4 5.500 0Z" fill="#fff" stroke="none" />
    <path d="M1 13L6 6" stroke="#1c1c1c" strokeWidth="1" />
    <path d="M9 10L7 13H10" strokeWidth="1.200" />
  </svg>
);

const Puzzle = () => (
  <svg width="22" height="22" viewBox="0 0 22 22" fill="none" stroke="#eec6cb" strokeWidth="2.200" strokeLinejoin="round">
    <path d="M2.500 3.500H7.500A2.200 2 0 0 1 12 3.500H18V9A2 2.300 0 0 1 18 13.500V20H2.500V14.500A2.800 2.800 0 0 0 2.500 9Z" />
  </svg>
);

const Arrow = ({ dir }: { dir: "up" | "down" | "left" | "right" }) => {
  const tall = dir === "left" || dir === "right";
  const d = {
    up: "M6 0.500L11.500 9Q12 10 11 10H1Q0 10 0.500 9Z",
    down: "M6 9.500L11.500 1Q12 0 11 0H1Q0 0 0.500 1Z",
    left: "M0.500 6L9 0.500Q10 0 10 1V11Q10 12 9 11.500Z",
    right: "M9.500 6L1 0.500Q0 0 0 1V11Q0 12 1 11.500Z",
  }[dir];
  return (
    <svg width={tall ? 10 : 12} height={tall ? 12 : 10}>
      <path d={d} fill="#a2a2a2" />
    </svg>
  );
};

export default function App() {
  return (
    <Screen>
      <GlobalStyle />
      <TabStrip>
        <TabSearch>
          <MdKeyboardArrowDown size={20} />
        </TabSearch>
        <Tab $w={295} $l={12} $r={15}>
          <TabIcon $gap={10}><YouTube /></TabIcon>
          <TabTitle $fade>
            (95)
            <TitleEmoji><Flame /></TitleEmoji>
            Sutherland Finally Tech H
          </TabTitle>
          <MdClose size={16} />
        </Tab>
        <TabDivider />
        <Tab $w={296} $l={13} $r={16}>
          <TabIcon $gap={9}><JobsLogo /></TabIcon>
          <TabTitle $fade>Sutherland hiring Software Deve</TabTitle>
          <MdClose size={16} />
        </Tab>
        <TabDivider />
        <Tab $w={300} $l={12} $r={20}>
          <TabIcon $gap={9}><FaGithub size={20} color="#fff" /></TabIcon>
          <TabTitle>Your Repositories</TabTitle>
          <MdClose size={16} />
        </Tab>
        <Tab $w={289} $l={10} $r={12} $active>
          <TabIcon $gap={9}><MdPublic size={21} color="#9aa0a8" /></TabIcon>
          <TabTitle>SweetStayByTaiyaba</TabTitle>
          <MdClose size={16} />
        </Tab>
        <NewTab><MdAdd size={22} /></NewTab>
        <WindowButtons>
          <svg width="14" height="14"><path d="M0.500 6.500H13.500" stroke="#fff" strokeWidth="1" /></svg>
          <svg width="14" height="14" fill="none" stroke="#fff" strokeWidth="1.100">
            <rect x="0.700" y="3" width="10.300" height="10.300" rx="1.500" />
            <path d="M3 0.700H11Q13.300 0.700 13.300 3V11" />
          </svg>
          <svg width="14" height="14"><path d="M0.500 0.500L13.500 13.500M13.500 0.500L0.500 13.500" stroke="#fff" strokeWidth="1.200" /></svg>
        </WindowButtons>
      </TabStrip>
      <Toolbar>
        <ToolbarInner>
          <NavButton $gap={21}><MdArrowBack size={23} /></NavButton>
          <NavButton $gap={23} $dim><MdArrowForward size={23} /></NavButton>
          <NavButton $gap={21}><MdRefresh size={23} /></NavButton>
          <Omnibox>
            <SiteInfo><MdInfoOutline size={20} /></SiteInfo>
            <Url><b>localhost</b>:8080/listings/680e6aecebb6534f1974388e</Url>
            <OmniAction><MdZoomIn size={23} /></OmniAction>
            <OmniAction><MdStarBorder size={23} /></OmniAction>
          </Omnibox>
          <ToolbarActions>
            <Puzzle />
            <ToolbarDivider />
            <MdQueueMusic size={25} />
            <Profile><Avatar size={25} /></Profile>
            <MdMoreVert size={26} />
          </ToolbarActions>
        </ToolbarInner>
      </Toolbar>

      <Viewport>
        <Page>
          <Navbar>
            <Brand><FaCompass size={44} /></Brand>
            <NavLink>Explore</NavLink>
            <SearchForm>
              <SearchField>Search Destinations</SearchField>
              <SearchButton>
                <FaMagnifyingGlass size={23} />
                Search
              </SearchButton>
            </SearchForm>
            <Account>
              <NavLink>Add New Listing</NavLink>
              <NavLink $bold>Log Out</NavLink>
            </Account>
          </Navbar>
          <Rule />
          <Section>
            <Heading>Where You'll be</Heading>
            <MapBox><CityMap /></MapBox>
          </Section>
          <Footer>
            <Socials>
              <FaSquareFacebook size={26} />
              <FaSquareInstagram size={26} />
              <FaLinkedin size={26} />
            </Socials>
            <Copyright>© SweetStay by Taiyaba</Copyright>
          </Footer>
        </Page>
        <VScroll>
          <Arrow dir="up" />
          <VThumb />
          <Arrow dir="down" />
        </VScroll>
      </Viewport>
      <HScroll>
        <Arrow dir="left" />
        <HThumb />
        <Arrow dir="right" />
      </HScroll>

      <Taskbar>
        <Weather>
          <WeatherIcon />
          <Lines>
            Hot days ahead
            <Muted>31°C</Muted>
          </Lines>
        </Weather>
        <Start><Windows /></Start>
        <TaskSearch>
          <Lens />
          Search
        </TaskSearch>
        <Apps>
          <AppButton><TaskView /></AppButton>
          <AppButton><Copilot /></AppButton>
          <AppButton><Outlook /></AppButton>
          <AppButton><Folder /></AppButton>
          <AppButton><Edge /></AppButton>
          <AppButton $active $bar="#4cc2ff" $barW={20}><Chrome /></AppButton>
          <AppButton $bar="#9a9a9a" $barW={8}><VSCode /></AppButton>
        </Apps>
        <Tray>
          <TrayIcon $gap={22}>
            <svg width="14" height="9" fill="none" stroke="#fff" strokeWidth="1.800"><path d="M1 8L7 2 13 8" /></svg>
          </TrayIcon>
          <TrayIcon $gap={18}><CloudSync /></TrayIcon>
          <TrayIcon $gap={22}><UpdateIcon /></TrayIcon>
          <TrayIcon $gap={22}>
            <Lines $align="center" $w={30}>ENG<br />IN</Lines>
          </TrayIcon>
          <TrayIcon $gap={10}><Wifi /></TrayIcon>
          <TrayIcon $gap={10}><Volume /></TrayIcon>
          <TrayIcon $gap={18}><Battery /></TrayIcon>
          <Lines $align="right" $w={80}>
            11:44
            <div>21-06-2025</div>
          </Lines>
        </Tray>
      </Taskbar>
    </Screen>
  );
}
